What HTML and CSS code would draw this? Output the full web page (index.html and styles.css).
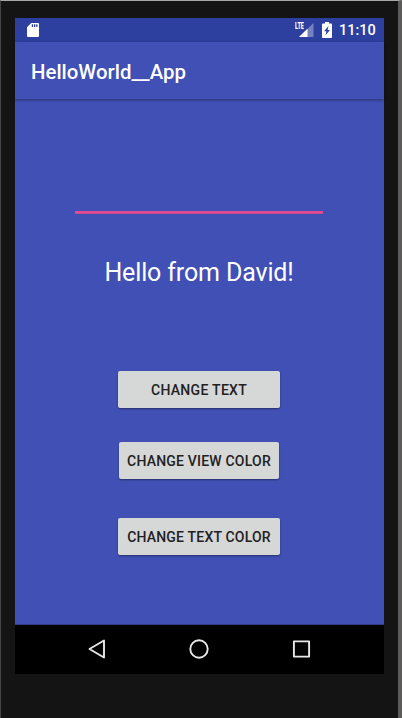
FILE: index.html
```html
<!DOCTYPE html>
<html lang="en">
<head>
<meta charset="utf-8">
<title>HelloWorld__App</title>
<link rel="stylesheet" href="styles.css">
</head>
<body>
<div class="device">
  <div class="screen">
    <header class="status">
      <svg class="sd" width="12" height="14" viewBox="0 0 12 14"><path fill="#fff" d="M4.3 0H11a1 1 0 0 1 1 1v12a1 1 0 0 1-1 1H1a1 1 0 0 1-1-1V4.3z"/><path fill="#2d409f" d="M4.8 1.3h1.3v2.8H4.8zM7 1.3h1.3v2.8H7zM9.2 1.3h1.3v2.8H9.2z"/></svg>
      <div class="indicators">
        <span class="signal"><svg width="19" height="16" viewBox="0 0 19 16"><path fill="#fff" fill-opacity=".35" d="M18.500 1v14H4z"/><path fill="#fff" d="M12.500 6.800V15H4z"/></svg><span class="lte">LTE</span></span>
        <svg class="battery" width="10" height="16" viewBox="0 0 10 16"><path fill="#fff" d="M3 0h4v1.500h2a1 1 0 0 1 1 1V15a1 1 0 0 1-1 1H1a1 1 0 0 1-1-1V2.500a1 1 0 0 1 1-1h2z"/><path fill="#2d409f" d="M6.500 4 2 9.300h2.400L3.500 13.300 8 8H5.600z"/></svg>
        <span class="clock">11:10</span>
      </div>
    </header>
    <div class="appbar"><h1 class="title">HelloWorld__App</h1></div>
    <main class="content">
      <div class="field"></div>
      <p class="hello">Hello from David!</p>
      <button class="btn btn-text">CHANGE TEXT</button>
      <button class="btn btn-view">CHANGE VIEW COLOR</button>
      <button class="btn btn-color">CHANGE TEXT COLOR</button>
    </main>
    <nav class="nav">
      <svg width="20" height="22" viewBox="0 0 20 22"><path d="M17 2.500v17L2.500 11z"/></svg>
      <svg width="20" height="22" viewBox="0 0 20 22"><circle cx="10" cy="11" r="8.700"/></svg>
      <svg width="20" height="22" viewBox="0 0 20 22"><path d="M2.900 3.400h15.200v15.200H2.900z"/></svg>
    </nav>
  </div>
</div>
</body>
</html>
```
FILE: styles.css
```css
* { box-sizing: border-box; }
body { margin: 0; font-family: Roboto, sans-serif; }
svg { display: block; }
.device {
  width: 402px;
  height: 718px;
  padding: 17px 13px 0 14px;
  background: #141414;
  border-top: 1px solid #a5a8a5;
  border-left: 1px solid #444;
  border-right: 4px solid #5c5b59;
}
.screen {
  width: 369px;
  height: 656px;
  background: #4050b5;
}
.status {
  display: flex;
  justify-content: space-between;
  height: 24px;
  padding: 5px 9px 0 12px;
  background: #2d409f;
}
.indicators { display: flex; }
.signal { position: relative; margin: -1px 8px 0 0; }
.lte {
  position: absolute;
  top: 0;
  left: 0;
  color: #fff;
  font: 900 9px/8px Roboto, sans-serif;
  transform: scaleX(.6);
  transform-origin: left;
}
.battery { margin-right: 7px; margin-top: -1px; }
.clock {
  width: 36px;
  color: #fff;
  font-size: 14.5px;
  font-weight: 500;
  line-height: 16px;
}
.appbar {
  height: 57px;
  padding: 15px 16px;
  box-shadow: 0 1px 3px rgba(0, 0, 0, .4);
}
.title {
  margin: 0;
  color: #fff;
  font-size: 20.400px;
  font-weight: 500;
  line-height: 30px;
}
.content {
  display: flex;
  flex-direction: column;
  align-items: center;
  height: 526px;
  padding: 112px 1px 0 0;
  border-bottom: 1px solid #303c88;
}
.field {
  width: 248px;
  height: 3px;
  background: linear-gradient(#d44994, #ec4a8c 50%, #ac4c9c);
}
.hello {
  margin: 43px 0 83px;
  color: #fff;
  font-size: 25px;
  letter-spacing: -.14px;
  line-height: 31px;
}
.btn {
  flex: none;
  width: 162px;
  height: 37px;
  padding: 1px 0 0;
  border: 0;
  border-radius: 2px;
  background: #d6d7d7;
  color: #212121;
  box-shadow: 0 1px 2px rgba(0, 0, 0, .4);
  font: 500 14px/20px Roboto, sans-serif;
  letter-spacing: .2px;
  white-space: nowrap;
}
.btn-text { letter-spacing: .3px; }
.btn-view { width: 160px; margin-top: 34px; }
.btn-color { margin-top: 39px; }
.nav {
  display: flex;
  justify-content: center;
  gap: 82px;
  height: 49px;
  padding: 13px 2px 0 0;
  background: #000;
}
.nav path, .nav circle {
  fill: none;
  stroke: #e8e8e8;
  stroke-width: 1.900;
  stroke-linejoin: round;
}
```
